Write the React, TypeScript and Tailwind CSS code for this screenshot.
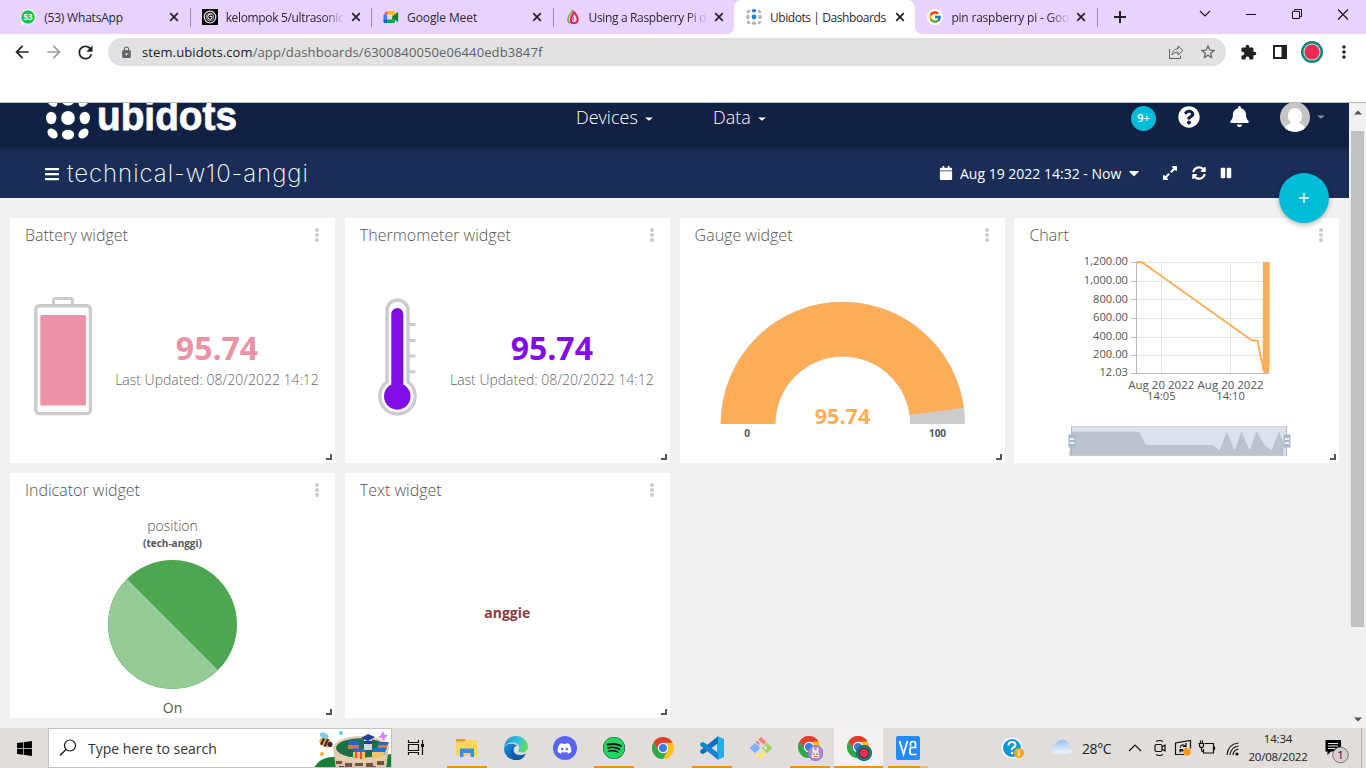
import React from "react";
import {
  FaBars, FaBell, FaCalendar, FaCaretDown, FaExpandAlt, FaPause, FaQuestionCircle, FaSyncAlt, FaWindows,
} from "react-icons/fa";
import { FaDiscord, FaSpotify } from "react-icons/fa6";
import { FcGoogle } from "react-icons/fc";
import { MdArrowBack, MdArrowForward, MdExtension, MdLock, MdMoreVert, MdRefresh, MdStarBorder } from "react-icons/md";

type PicProps = { x: number; y: number; w: number; h: number; className?: string; children: React.ReactNode };

function Pic({ x, y, w, h, className = "", children }: PicProps) {
  return (
    <svg width={w} height={h} viewBox={`${x} ${y} ${w} ${h}`} className={`block shrink-0 ${className}`} fill="none">
      {children}
    </svg>
  );
}

/* ---------- browser chrome ---------- */

const dotGrid: [number, number, number, number, number][] = [
  [2.5, 2.5, 2, 1.4, -45], [8, 1.8, 2.3, 1.8, 0], [13.5, 2.5, 2, 1.4, 45],
  [1.9, 8, 1.7, 2.3, 0], [8, 8, 2.4, 2.4, 0], [14.1, 8, 1.7, 2.3, 0],
  [2.5, 13.5, 2, 1.4, 45], [8, 14.2, 2.3, 1.8, 0], [13.5, 13.5, 2, 1.4, -45],
];

function WhatsAppIcon() {
  return (
    <Pic x={0} y={0} w={16} h={16}>
      <path d="M8.3.3a7.6 7.6 0 1 1-3.4 14.5L.3 16l1.2-4.4A7.6 7.6 0 0 1 8.3.3Z" fill="#fff" />
      <circle cx="8" cy="8" r="6.8" fill="#19c24f" />
      <text x="8" y="10.9" textAnchor="middle" fontSize="8" fontWeight="700" fill="#fff" className="font-['Open_Sans',sans-serif]">53</text>
    </Pic>
  );
}

function SpiralIcon() {
  return (
    <Pic x={0} y={0} w={16} h={16}>
      <rect width="16" height="16" fill="#000" />
      <circle cx="8" cy="8" r="5.8" stroke="#ddd" strokeWidth="1.300" />
      <path d="M8 8c.3-1.600 2.400-.8 2 .8-.5 2-3.800 1.800-4.200-.4C5.400 5.800 8 4.300 10 5.200" stroke="#fff" strokeWidth="1.100" />
      <circle cx="8" cy="8" r="3.800" stroke="#bbb" strokeWidth=".9" />
    </Pic>
  );
}

function MeetIcon() {
  return (
    <Pic x={0} y={0} w={16} h={16}>
      <path d="M.5 5.600 4 2v3.600Z" fill="#ea4335" />
      <path d="M4 2h6.500v3.600H4Z" fill="#fbbc04" />
      <path d="M.5 5.600H4V11H.5Z" fill="#2684fc" />
      <path d="M.5 10.800H4V14H1.700Q.5 14 .5 12.800Z" fill="#0066da" />
      <path d="M4 10.600h5V8l3-2.400V12.800Q12 14 10.800 14H4Z" fill="#00ac47" />
      <path d="M10.500 2Q12 2 12 3.500v2L9 8V5.600h1Z" fill="#ffba00" />
      <path d="M9 8l5.300-4.700q.8-.4.800.4v8.600q0 .8-.8.400Z" fill="#00832d" />
    </Pic>
  );
}

function DropIcon() {
  return (
    <Pic x={0} y={0} w={16} h={16}>
      <path d="M8 1C7 4 2.800 6.500 2.800 10.300c0 1.700.8 3 2 3.900" stroke="#7cb342" strokeWidth="1.700" />
      <path d="M9 2.500c-.3 3-3.300 5-3.300 8.200 0 2.300 1.300 3.500 3.100 3.500 2.200 0 3.900-1.500 3.900-4.200C12.700 6.800 10 5 9 2.500Z" stroke="#e0204e" strokeWidth="2" />
      <path d="M8.800 8c-1 1.500-1.300 2.200-.2 3.700" stroke="#e0204e" strokeWidth="1" />
    </Pic>
  );
}

function UbidotsIcon() {
  return (
    <Pic x={0} y={0} w={16} h={16}>
      {dotGrid.map(([cx, cy, rx, ry, a], i) => (
        <ellipse key={i} cx={cx} cy={cy} rx={rx} ry={ry} transform={`rotate(${a} ${cx} ${cy})`} fill={i === 1 || i === 4 ? "#1c86d1" : "#b4b4b4"} />
      ))}
    </Pic>
  );
}

function GoogleIcon() {
  return (
    <span className="flex size-4 items-center justify-center rounded-full bg-white">
      <FcGoogle size={14} />
    </span>
  );
}

function Close() {
  return (
    <Pic x={0} y={0} w={10} h={10} className="ml-[6px]">
      <path d="M1.200 1.200 8.800 8.800M8.800 1.200 1.200 8.800" stroke="#202124" strokeWidth="1.700" />
    </Pic>
  );
}

const tabs = [
  { title: "(53) WhatsApp", icon: <WhatsAppIcon />, ls: "tracking-[-0.2px]" },
  { title: "kelompok 5/ultrasonic", icon: <SpiralIcon />, ls: "tracking-[-0.34px]", fade: true },
  { title: "Google Meet", icon: <MeetIcon />, ls: "tracking-[-0.1px]" },
  { title: "Using a Raspberry Pi d", icon: <DropIcon />, ls: "tracking-[-0.34px]", fade: true },
  { title: "Ubidots | Dashboards", icon: <UbidotsIcon />, active: true, ls: "tracking-[-0.42px]" },
  { title: "pin raspberry pi - Goo", icon: <GoogleIcon />, ls: "tracking-[-0.2px]", fade: true },
];

function TabStrip() {
  return (
    <div className="flex h-[34px] bg-[#e8d3ff] pl-[8.2px]">
      {tabs.map((t, i) => (
        <div
          key={t.title}
          className={`relative flex h-[34px] w-[181.450px] shrink-0 items-center pl-3 ${t.active ? "rounded-t-lg bg-white" : ""}`}
        >
          {(i === 1 || i === 2 || i === 3) && <span className="absolute top-[8px] left-0 h-[19px] w-px bg-[#9a8fa6]" />}
          {t.active && (
            <>
              <Pic x={0} y={0} w={8} h={8} className="absolute bottom-0 -left-2"><path d="M8 0v8H0Q8 8 8 0Z" fill="#fff" /></Pic>
              <Pic x={0} y={0} w={8} h={8} className="absolute -right-2 bottom-0"><path d="M0 0v8h8Q0 8 0 0Z" fill="#fff" /></Pic>
            </>
          )}
          {t.icon}
          <span
            className={`ml-2 w-[119px] overflow-hidden pt-px text-[12px] leading-[18px] whitespace-nowrap text-[#2b2730] ${t.ls} ${t.fade ? "[mask-image:linear-gradient(to_right,black_82%,transparent)]" : ""}`}
          >
            {t.title}
          </span>
          <Close />
        </div>
      ))}
      <span className="mt-2 h-[19px] w-px bg-[#9a8fa6]" />
      <Pic x={0} y={0} w={12} h={12} className="mt-[11px] ml-4">
        <path d="M6 0v12M0 6h12" stroke="#202124" strokeWidth="2" />
      </Pic>
      <Pic x={1190} y={0} w={176} h={34} className="ml-auto">
        <path d="m1200 11 5 5 5-5M1246 14.500h10" stroke="#111" strokeWidth="1.100" />
        <path d="M1292.500 11.500h7v7h-7ZM1294.500 11.500v-2h7v7h-2" stroke="#111" />
        <path d="m1338 9.500 10 10M1348 9.500l-10 10" stroke="#111" strokeWidth="1.100" />
      </Pic>
    </div>
  );
}

function Toolbar() {
  return (
    <div className="h-[69px] border-b border-[#b9bbbe] bg-white">
      <div className="flex h-9 items-center">
        <MdArrowBack size={20} className="ml-3 text-[#202124]" />
        <MdArrowForward size={20} className="ml-3 text-[#9c9ea1]" />
        <MdRefresh size={21} className="ml-[11px] text-[#202124]" />
        <div className="ml-3 flex h-7 w-[1118px] items-center rounded-full bg-[#e1e1e1]">
          <MdLock size={13} className="ml-[11.500px] text-[#5f6368]" />
          <span className="ml-[9.500px] pt-px text-[13px] tracking-[0.11px] text-[#5f6368]">
            <span className="text-[#202124]">stem.ubidots.com</span>/app/dashboards/6300840050e06440edb3847f
          </span>
          <Pic x={0} y={0} w={16} h={16} className="ml-auto">
            <path d="M1.500 5v9.500h11v-3" stroke="#5f6368" />
            <path d="M10 2v2.700C6 5 4.500 7.500 4 11c1.500-2 3.200-2.800 6-2.800V11l5-4.500Z" stroke="#5f6368" strokeLinejoin="round" />
          </Pic>
          <MdStarBorder size={18} className="mr-[9px] ml-[15px] text-[#5f6368]" />
        </div>
        <MdExtension size={17} className="ml-[14px] text-[#202124]" />
        <Pic x={0} y={0} w={14} h={14} className="ml-4">
          <path d="M1 1h12v12H1Z" stroke="#202124" strokeWidth="2" />
          <path d="M8.500 0H14v14H8.500Z" fill="#202124" />
        </Pic>
        <Pic x={0} y={0} w={22} h={22} className="ml-[14px]">
          <circle cx="11" cy="11" r="11" fill="#0c8478" />
          <circle cx="11" cy="11" r="8.600" fill="#b9ead0" />
          <circle cx="11" cy="11" r="7.500" fill="#ee2a55" />
          <circle cx="11" cy="11" r="4.500" stroke="#8f1d3c" strokeDasharray=".9 3.800" />
        </Pic>
        <MdMoreVert size={20} className="ml-[11px] text-[#202124]" />
      </div>
    </div>
  );
}

/* ---------- dashboard header ---------- */

function SmallCaret({ className = "" }: { className?: string }) {
  return <Pic x={0} y={0} w={8} h={4} className={className}><path d="M0 .5h8L4 3.800Z" fill="currentColor" /></Pic>;
}

const logoDots: [number, number, number, number, number][] = [
  [52.5, 102, 5.6, 4, 45], [68, 100.8, 6, 5, 0], [83.5, 102, 5.6, 4, -45],
  [51.2, 118, 5.2, 6.2, 0], [68, 118, 6.9, 6.9, 0], [84.8, 118, 5.2, 6.2, 0],
  [52.5, 133.5, 5.8, 4.3, 45], [68, 134.7, 6.2, 5, 0], [83.5, 133.5, 5.8, 4.3, -45],
];

function TopNav() {
  return (
    <div className="flex h-[45px] bg-[#112143] font-['Open_Sans',sans-serif] text-white">
      <Pic x={45} y={103} w={195} h={45} className="ml-[45px]">
        {logoDots.map(([cx, cy, rx, ry, a], i) => (
          <ellipse key={i} cx={cx} cy={cy} rx={rx} ry={ry} transform={`rotate(${a} ${cx} ${cy})`} fill="#fff" />
        ))}
        <text x="97" y="129.500" textLength="140" lengthAdjust="spacingAndGlyphs" fontSize="40.500" fontWeight="700" fill="#fff" stroke="#fff" strokeWidth=".8" strokeLinejoin="round" className="font-['Liberation_Sans',sans-serif]">ubidots</text>
      </Pic>
      <div className="ml-[336px] flex h-[29px] items-center text-[18px] font-light">
        <span className="w-[62px]">Devices</span>
        <SmallCaret className="mt-[2px] ml-[7px]" />
        <span className="ml-[60px] w-[38px]">Data</span>
        <SmallCaret className="mt-[2px] ml-[7px]" />
      </div>
      <div className="mt-[3px] ml-auto flex size-[25px] items-center justify-center rounded-full bg-[#00bcd8] text-[11px] font-semibold">9+</div>
      <FaQuestionCircle size={22} className="mt-[3px] ml-[22px]" />
      <FaBell size={21} className="mt-[3px] ml-[29px]" />
      <Pic x={1280} y={103} w={30} h={45} className="ml-[30px]">
        <clipPath id="avatar"><circle cx="1295" cy="117" r="15" /></clipPath>
        <g clipPath="url(#avatar)">
          <path d="M1280 100h30v35h-30Z" fill="#c5c5c5" />
          <path d="M1284 134c0-8 3-9.500 7.500-11-2.500-2-3.500-4.500-3.500-7.500 0-4.500 3-7.500 7-7.500s7 3 7 7.500c0 3-1 5.500-3.500 7.500 4.500 1.500 7.500 3 7.500 11Z" fill="#fff" />
        </g>
      </Pic>
      <SmallCaret className="mt-[12px] mr-[24px] ml-[7px] text-[#8690a3]" />
    </div>
  );
}

function SubNav() {
  return (
    <div className="relative flex h-[50px] items-center bg-[#192d56] bg-linear-to-b from-[#15274c] to-[#192d56] to-10% font-['Open_Sans',sans-serif] text-white">
      <FaBars size={16} className="mt-[2px] ml-11" />
      <span className="ml-[7px] w-[250px] pt-[2px] font-['Inter',sans-serif] text-[24px] leading-none font-extralight tracking-[0.950px] whitespace-nowrap">technical-w10-anggi</span>
      <FaCalendar size={14} className="ml-[622px]" />
      <span className="ml-[7px] w-[163px] text-[14px] font-medium whitespace-nowrap">Aug 19 2022 14:32 - Now</span>
      <FaCaretDown size={16} className="ml-[3px]" />
      <FaExpandAlt size={16} className="ml-5" />
      <FaSyncAlt size={14} className="ml-[14px]" />
      <FaPause size={12} className="ml-[14px]" />
      <div className="absolute top-[25px] left-[1279px] z-10 flex size-[50px] items-center justify-center rounded-full bg-[#00bcd8] shadow-[0_2px_5px_rgba(0,0,0,0.3)]">
        <Pic x={0} y={0} w={10} h={10}><path d="M5 0v10M0 5h10" stroke="#fff" strokeWidth="1.400" /></Pic>
      </div>
    </div>
  );
}

/* ---------- widgets ---------- */

function Card({ title, children }: { title: string; children: React.ReactNode }) {
  return (
    <section className="relative flex h-[245px] flex-col bg-white font-['Open_Sans',sans-serif]">
      <header className="flex h-[34px] shrink-0 items-center justify-between pr-4 pl-[15px]">
        <h2 className="text-[16px] leading-[34px] font-light text-[#555]">{title}</h2>
        <Pic x={0} y={0} w={4} h={14}>
          <circle cx="2" cy="2" r="2" fill="#ccc" /><circle cx="2" cy="7" r="2" fill="#ccc" /><circle cx="2" cy="12" r="2" fill="#ccc" />
        </Pic>
      </header>
      {children}
      <Pic x={0} y={0} w={6} h={6} className="absolute right-[3px] bottom-[3px]">
        <path d="M5 0v5H0" stroke="#555" strokeWidth="2" />
      </Pic>
    </section>
  );
}

function Reading({ color }: { color: string }) {
  return (
    <div className="mt-[72px] mr-[14px] ml-auto w-[208px] text-center">
      <div className={`text-[32px] leading-[48px] font-bold ${color}`}>95.74</div>
      <div className="text-[14px] leading-[16px] font-light whitespace-nowrap text-[#666]">Last Updated: 08/20/2022 14:12</div>
    </div>
  );
}

function Battery() {
  return (
    <div className="flex">
      <Pic x={10} y={252} w={90} h={200}>
        <path d="M53.500 306v-5.500q0-2 2-2h15q2 0 2 2v5.500" stroke="#ccc" strokeWidth="3" />
        <rect x="35.800" y="305.800" width="54.600" height="107.800" rx="3.500" stroke="#ccc" strokeWidth="3.400" />
        <rect x="40.300" y="315" width="45.600" height="90.500" rx="1.500" fill="#eb92a7" />
      </Pic>
      <Reading color="text-[#eb92a7]" />
    </div>
  );
}

function Thermometer() {
  return (
    <div className="flex">
      <Pic x={345} y={252} w={90} h={200}>
        <path d="M387 382V310.500a10.500 10.500 0 0 1 21 0V382a17.700 17.700 0 1 1-21 0Z" stroke="#ccc" strokeWidth="3.400" />
        <path d="M409 324.500h6.500M409 340.500h6.500M409 356h6.500M409 371.700h6.500" stroke="#ccc" strokeWidth="3" />
        <path d="M391.300 314a6 6 0 0 1 12 0v70.500a13.300 13.300 0 1 1-12 0Z" fill="#820ce8" />
      </Pic>
      <Reading color="text-[#820ce8]" />
    </div>
  );
}

function Gauge() {
  return (
    <Pic x={680} y={252} w={325} h={211}>
      <path d="M720.500 424a122.300 122.300 0 0 1 244.600 0H910.100a67.300 67.300 0 0 0-134.600 0Z" fill="#ccc" />
      <path d="M720.800 424A122 122 0 0 1 842.800 302A122 122 0 0 1 963.710 407.720L909.700 414.990A67.500 67.500 0 0 0 842.800 356.500A67.500 67.500 0 0 0 775.300 424Z" fill="#ffae57" />
      <g fontWeight="700" textAnchor="middle" className="font-['Open_Sans',sans-serif]">
        <text x="842.500" y="423.500" fontSize="21.600" fill="#ffae57">95.74</text>
        <text x="747" y="437" fontSize="10" fill="#555">0</text>
        <text x="937.500" y="437" fontSize="10" fill="#555">100</text>
      </g>
    </Pic>
  );
}

const yLabels: [string, number][] = [
  ["1,200.00", 262], ["1,000.00", 281], ["800.00", 299.5], ["600.00", 318], ["400.00", 337], ["200.00", 355], ["12.03", 373],
];

function SliderHandle({ x }: { x: number }) {
  return (
    <g>
      <path d={`M${x} 426.500v29.500`} stroke="#a7b7cc" />
      <rect x={x - 3} y="434.500" width="7" height="13" fill="#a7b7cc" />
      <path d={`M${x - 1.5} 438.500h4v1h-4ZM${x - 1.5} 442.500h4v1h-4Z`} stroke="#fff" strokeWidth=".8" />
    </g>
  );
}

function Chart() {
  return (
    <Pic x={1014} y={252} w={325} h={211}>
      <path d="M1136 262.500h133M1136 281.500h133M1136 299.500h133M1136 318.500h133M1136 337.500h133M1136 355.500h133M1161.500 262v111M1230.500 262v111" stroke="#e6e6e6" />
      <path d="M1131 262.500h5M1131 281.500h5M1131 299.500h5M1131 318.500h5M1131 337.500h5M1131 355.500h5M1131 373.500h138M1136.500 262v112" stroke="#bbb" />
      <path d="M1136 262.200h6L1252 340.500h5.500L1263.700 371 1264 262l.6 111 .6-111 .6 111 .6-111 .6 111 .6-111 .6 111 .5-111v103" stroke="#ffae57" strokeWidth="2" strokeLinejoin="bevel" />
      <g fontSize="11.200" fill="#555" textAnchor="end" className="font-['Open_Sans',sans-serif]">
        {yLabels.map(([t, y]) => <text key={t} x="1128" y={y + 3.3}>{t}</text>)}
      </g>
      <g fontSize="11.200" fill="#555" textAnchor="middle" className="font-['Open_Sans',sans-serif]">
        <text x="1161.300" y="389"><tspan textLength="66" lengthAdjust="spacingAndGlyphs">Aug 20 2022</tspan><tspan x="1161.300" y="400">14:05</tspan></text>
        <text x="1230.600" y="389"><tspan textLength="66" lengthAdjust="spacingAndGlyphs">Aug 20 2022</tspan><tspan x="1230.600" y="400">14:10</tspan></text>
      </g>
      <rect x="1071.500" y="426.500" width="215" height="29" fill="#dbe2ec" stroke="#d0d3d8" />
      <path d="M1072 431.700h67l7 13.300h67.500l6 5.500 7.500-19 7.500 19 7-19 8 19 7-19 8 13.500 7 5.500 7.500-19 4.500 11V455.500h-214.500Z" fill="#bcc3cd" />
      <SliderHandle x={1071.5} />
      <SliderHandle x={1286.5} />
    </Pic>
  );
}

function Indicator() {
  return (
    <div className="flex flex-col items-center">
      <div className="mt-[10px] text-[14px] leading-[18px] font-light text-[#555]">position</div>
      <div className="text-[10px] leading-[16px] font-bold text-[#555]">(tech-anggi)</div>
      <Pic x={107} y={559} w={131} h={131} className="mt-[8px]">
        <circle cx="172.500" cy="624.500" r="64.500" fill="#4ca750" />
        <path d="M127.100 579.100 217.900 669.900A64.210 64.210 0 0 1 127.100 669.900A64.210 64.210 0 0 1 127.100 579.100Z" fill="#94cb96" />
      </Pic>
      <div className="mt-[8px] text-[14px] leading-[20px] text-[#555]">On</div>
    </div>
  );
}

/* ---------- taskbar ---------- */

function ChromeLogo({ cx, cy, r }: { cx: number; cy: number; r: number }) {
  return (
    <g transform={`translate(${cx} ${cy}) scale(${r / 11})`}>
      <circle r="11" fill="#fbc116" />
      <path d="M-9.530-5.500A11 11 0 0 1 9.530-5.500L0-5-4.330 2.500Z" fill="#df3e30" />
      <path d="M-9.530-5.500A11 11 0 0 0 0 11L4.330 2.500-4.330 2.500Z" fill="#2da94f" />
      <circle r="5.200" fill="#fff" />
      <circle r="4" fill="#3b7de9" />
    </g>
  );
}

function AppCell({ children, bar, active, vnc }: { children: React.ReactNode; bar?: boolean; active?: boolean; vnc?: boolean }) {
  return (
    <div className={`relative flex h-10 w-[49px] shrink-0 items-center justify-center ${active ? "bg-[#f3f1f1]" : ""}`}>
      {children}
      {bar && <span className={`absolute bottom-0 h-[2px] bg-[#ff8c00] ${active ? "inset-x-0" : vnc ? "left-[5px] w-8" : "left-[5px] w-10"}`} />}
      {vnc && <span className="absolute bottom-0 left-[37px] h-[2px] w-2 bg-[#f9b565]" />}
    </div>
  );
}

function SearchArt() {
  return (
    <Pic x={310} y={729} w={81} h={38}>
      <path d="M314 768q6-11 19-11h40l18-3v14Z" fill="#168038" />
      <path d="M333 746h56l-3 24h-50Z" fill="#dcc5a6" />
      <ellipse cx="361" cy="748" rx="28" ry="12" fill="#e4cfb2" />
      <ellipse cx="361" cy="748" rx="25" ry="9.800" fill="#1b7048" />
      <path d="m348 744 11-1v6h-11ZM378 744l11-1-3 6-8-1Z" fill="#d97538" />
      <path d="m349 740 10 1v4h-11ZM378 742l11 0-2 3h-9Z" fill="#2c63bd" />
      <path d="m353 748 13 1v8l-12-1ZM373 748h14l-3 7-12 2Z" fill="#2870ce" />
      <path d="M353 752h12v7l-12-2ZM372 752h13l-2 5-11 2Z" fill="#f3c263" />
      <path d="M356 752v6M361 752v7" stroke="#e64c42" strokeWidth="2" />
      <path d="M364 739h8v11h-8Z" fill="#d2d7df" />
      <path d="m361 738 7-4 7 3-7 4ZM364 741h8v3h-8Z" fill="#283e98" />
      <path d="M336 757q24 8 50 0" stroke="#e4cfb2" strokeWidth="3" />
      <path d="M336 761h6v3h-6ZM345 763h7v4h-7ZM355 763h8v3h-8ZM366 763h7v4h-7ZM377 761h7v4h-7Z" fill="#76523f" />
      <path d="M339 766h5v2h-5ZM373 766h3v2h-3Z" fill="#5b4a6b" />
      <g transform="rotate(25 325 741)">
        <ellipse cx="326" cy="742" rx="6.500" ry="4.500" fill="#f2ab31" />
        <path d="M323 738v8M327 738v8" stroke="#372349" strokeWidth="2.200" />
        <ellipse cx="322" cy="736.500" rx="4.500" ry="2.800" fill="#7fcdea" />
        <circle cx="331" cy="742" r="2.500" fill="#372349" />
      </g>
      <circle cx="341" cy="733" r="2" fill="#5ec8e8" />
      <circle cx="322" cy="754" r="2" fill="#ffaf1e" />
      <path d="m383 731 1.500 3.500 3.500 1-3 2-1 4-2-3.500-4-.5 3-2.500Z" fill="#dd7dfc" />
    </Pic>
  );
}

function Taskbar() {
  return (
    <div className="flex h-10 bg-[#e1dddb]">
      <div className="flex w-12 items-center justify-center"><FaWindows size={17} /></div>
      <div className="flex h-10 w-[344px] items-center border border-[#c6c4c3] bg-white">
        <Pic x={0} y={0} w={18} h={18} className="ml-[10px]">
          <circle cx="11" cy="6.500" r="5.500" stroke="#111" strokeWidth="1.200" />
          <path d="m7 10.500-6 6" stroke="#111" strokeWidth="1.200" />
        </Pic>
        <span className="ml-[11px] text-[14px] whitespace-nowrap text-[#333]">Type here to search</span>
        <div className="ml-auto"><SearchArt /></div>
      </div>
      <Pic x={392} y={728} w={50} h={40}>
        <path d="M408.500 740v2.500h10V740M408.500 755v-2.500h10v2.500M408.500 744.500h10v6h-10ZM422.500 740v15" stroke="#111" strokeWidth="1.200" />
        <path d="M421 744h3v3h-3Z" fill="#111" />
      </Pic>
      <AppCell bar>
        <Pic x={0} y={0} w={22} h={20}>
          <path d="M0 1h9l2 3H0Z" fill="#e2a100" />
          <path d="M0 3.500h8l2-1.500h11v16H0Z" fill="#ffd45f" />
          <path d="M4 10.500h14V19h-3.500v-4h-7v4H4Z" fill="#3b8fd6" />
        </Pic>
      </AppCell>
      <AppCell>
        <Pic x={0} y={0} w={24} h={24}>
          <defs>
            <linearGradient id="edgeTop" x1="2" y1="6" x2="24" y2="12" gradientUnits="userSpaceOnUse"><stop stopColor="#209bd8" /><stop offset=".5" stopColor="#35c1d8" /><stop offset="1" stopColor="#6be34e" /></linearGradient>
            <linearGradient id="edgeBase" x1="0" y1="10" x2="14" y2="24" gradientUnits="userSpaceOnUse"><stop stopColor="#1390dc" /><stop offset="1" stopColor="#0c4f9e" /></linearGradient>
          </defs>
          <path d="M0 12A12 12 0 0 0 21 20C16 21.500 10 20 9.500 14.500c0-3 2-4.500 3.500-5C8 6 1.500 8 0 12Z" fill="url(#edgeBase)" />
          <path d="M22 17.500a12 12 0 0 1-8 6C7 23 5 15 9 11c-1 6 5 10.500 13 6.500Z" fill="#0e5aa8" />
          <path d="M0 11.500C.6 5 5.500 0 12 0c7.500 0 12 5.500 12 10.500 0 4-3 6-6 6s-4.500-1-3.500-2.500C17 10.500 13 6.500 8.500 6.500 4 6.500 1 9 0 11.500Z" fill="url(#edgeTop)" />
        </Pic>
      </AppCell>
      <AppCell>
        <span className="flex size-6 items-center justify-center rounded-full bg-[#5865f2] text-white"><FaDiscord size={15} /></span>
      </AppCell>
      <AppCell bar>
        <span className="flex size-[22px] items-center justify-center rounded-full bg-[#111] text-[#1ed760]"><FaSpotify size={22} /></span>
      </AppCell>
      <AppCell><Pic x={-11} y={-11} w={22} h={22}><ChromeLogo cx={0} cy={0} r={11} /></Pic></AppCell>
      <AppCell bar>
        <Pic x={0} y={0} w={24} h={24}>
          <path d="M18 .2 24 3v18l-6 2.800L17 22V2Z" fill="#29a9ee" />
          <path d="M18 .2V7.200L3 18.300.2 16.500v-2Z" fill="#0e6eb8" />
          <path d="M18 23.800V16.800L3 5.700.2 7.500v2Z" fill="#1186ce" />
        </Pic>
      </AppCell>
      <AppCell>
        <Pic x={0} y={0} w={24} h={24}>
          <g transform="rotate(45 12 12)">
            <rect x="4" y="4" width="7.500" height="7.500" rx="1" fill="#f98080" />
            <rect x="12.500" y="4" width="7.500" height="7.500" rx="1" fill="#98d562" />
            <rect x="4" y="12.500" width="7.500" height="7.500" rx="1" fill="#80b0ff" />
            <rect x="12.500" y="12.500" width="7.500" height="7.500" rx="1" fill="#ffe178" />
          </g>
          <path d="m8 3 4 4.500V17M12 8l5 4" stroke="#e1dddb" strokeWidth="1.600" />
          <circle cx="12" cy="8" r="1.800" fill="#e1dddb" /><circle cx="16.500" cy="12" r="1.800" fill="#e1dddb" /><circle cx="12" cy="16.500" r="1.800" fill="#e1dddb" />
        </Pic>
      </AppCell>
      <AppCell bar>
        <Pic x={0} y={0} w={26} h={26}>
          <ChromeLogo cx={12} cy={12} r={11} />
          <circle cx="18.500" cy="18" r="7.500" fill="#a98bd8" stroke="#8f6cc4" />
          <path d="M15.500 18V12.500q1-1 1.500 0l.8 3h1.400l.8-3q.5-1 1.500 0V18q1.500 2 .5 5h-7q-1-3 .5-5Z" fill="#f7e9dc" />
          <path d="M17 18.500v1.300M20 18.500v1.300" stroke="#333" />
          <path d="M16.500 21.500h4.500" stroke="#e08a39" strokeWidth="1.400" />
        </Pic>
      </AppCell>
      <AppCell bar active>
        <Pic x={0} y={0} w={26} h={26}>
          <ChromeLogo cx={12} cy={12} r={11} />
          <circle cx="18" cy="18" r="8" fill="#16574f" />
          <circle cx="18" cy="18" r="7" fill="#159584" />
          <circle cx="18" cy="18" r="5.500" fill="#31242d" />
          <circle cx="18" cy="18" r="4.500" fill="#ee2a55" />
        </Pic>
      </AppCell>
      <AppCell bar vnc>
        <Pic x={0} y={0} w={24} h={24}>
          <rect width="24" height="24" rx="2" fill="#248bf3" />
          <path d="m3.500 5 4 13L11.500 5" stroke="#fff" strokeWidth="1.800" />
          <path d="M14.500 10.500V7.500q0-2 2.500-2t2.500 2v4h-3.500q-2 0-2 2v3q0 2 2 2h4.500" stroke="#fff" strokeWidth="1.700" />
        </Pic>
      </AppCell>
      <Pic x={932} y={728} w={148} h={40}>
        <circle cx="1012" cy="748" r="10.500" fill="#fff" />
        <circle cx="1012" cy="748" r="9" fill="#0c98d8" />
        <path d="M1008.500 745.500q0-3.500 3.500-3.500t3.500 3q0 1.500-2 2.500t-1.500 2.500" stroke="#fff" strokeWidth="2" />
        <circle cx="1012" cy="753" r="1.300" fill="#fff" />
        <circle cx="1019" cy="753" r="5" fill="#f2a71e" />
        <path d="M1019 750v1.500M1019 752.500v3.500" stroke="#fff" strokeWidth="1.400" />
        <defs><linearGradient id="cloud" x1="0" y1="0" x2="0" y2="1"><stop stopColor="#9fc1ee" /><stop offset="1" stopColor="#edf4ff" /></linearGradient></defs>
        <path d="M1055 753.500a4.700 4.700 0 0 1 .5-9.200 7 7 0 0 1 12.500-1.500q1.500 1.800 1.200 3.500a3.700 3.700 0 0 1 .3 7.200Z" fill="url(#cloud)" />
      </Pic>
      <span className="flex w-[41px] items-center pl-[2px] text-[14px] tracking-[-0.4px] text-[#222]">28°C</span>
      <Pic x={1121} y={728} w={124} h={40}>
        <g stroke="#111" strokeWidth="1.200">
          <path d="m1129 751 6-6 6 6" />
          <path d="M1156 741.500q3.500-2 7 0M1156 754.500q3.500 2 7 0" />
          <rect x="1155" y="744.500" width="7" height="7" rx="1.500" />
          <path d="m1162 747 3-2v6l-3-2" />
          <path d="M1184 754.500h-8.500V743l15-2.500v8" />
          <path d="M1180 747.500q1-3 3.500-2.500l2 1.200M1186 743v3.500h-3M1186 748.500q-2 3.500-5.500 2M1180 752.500v-3h3" />
          <path d="M1205 743.500h8.500v9.500h-10V749M1214.500 746.500v3.500" />
          <path d="M1199.500 743v2.500q0 2 2 2t2-2V743M1201.500 747v2.500q0 2 2 2M1198.500 743.500h6M1200.500 740.500v3M1202.500 740.500v3" />
          <path d="M1227 755q1-11 11.500-12M1230 755q1-8 8.500-9M1233 755q.5-5 5.500-6" />
        </g>
        <circle cx="1237" cy="754" r="1.600" fill="#111" />
        <circle cx="1187" cy="752" r="3.700" fill="#ff9810" />
      </Pic>
      <div className="flex w-[66px] flex-col items-center pt-[2px] text-[11.500px] leading-[18px] tracking-[-0.2px] text-[#222]">
        <span>14:34</span>
        <span>20/08/2022</span>
      </div>
      <Pic x={1311} y={728} w={55} h={40}>
        <path d="M1325.500 740h15.500v11.500h-10l-3.500 3.500v-3.500h-2Z" fill="#000" />
        <path d="M1328 743.500h10M1328 746h10M1328 748.500h7" stroke="#eee" />
        <circle cx="1340.500" cy="755" r="7.800" fill="#d2d0ce" stroke="#777" />
        <text x="1340.500" y="759" textAnchor="middle" fontSize="11.500" fill="#111" className="font-['Open_Sans',sans-serif]">1</text>
        <path d="M1361.500 728v40" stroke="#b9b6b4" />
      </Pic>
    </div>
  );
}

export default function App() {
  return (
    <div className="flex h-[768px] w-[1366px] flex-col overflow-hidden bg-[#f1f1f1] font-['Open_Sans','Noto_Sans',sans-serif]">
      <TabStrip />
      <Toolbar />
      <div className="flex h-[625px]">
        <main className="w-[1349px]">
          <TopNav />
          <SubNav />
          <div className="grid grid-cols-[325px_325px_325px_325px] gap-x-[9.800px] gap-y-[10px] pt-5 pl-[10px]">
            <Card title="Battery widget"><Battery /></Card>
            <Card title="Thermometer widget"><Thermometer /></Card>
            <Card title="Gauge widget"><Gauge /></Card>
            <Card title="Chart"><Chart /></Card>
            <Card title="Indicator widget"><Indicator /></Card>
            <Card title="Text widget">
              <div className="mt-[96px] text-center text-[14px] leading-5 font-bold text-[#903a3a]">anggie</div>
            </Card>
          </div>
        </main>
        <div className="flex w-[17px] flex-col items-center bg-[#f1f1f1]">
          <Pic x={0} y={0} w={8} h={5} className="mt-[7px]"><path d="m0 4.500 4-4 4 4Z" fill="#505050" /></Pic>
          <div className="mt-4 h-[496px] w-[13px] bg-[#c1c1c1]" />
          <Pic x={0} y={0} w={8} h={5} className="mt-auto mb-[6px]"><path d="m0 .5 4 4 4-4Z" fill="#505050" /></Pic>
        </div>
      </div>
      <Taskbar />
    </div>
  );
}
